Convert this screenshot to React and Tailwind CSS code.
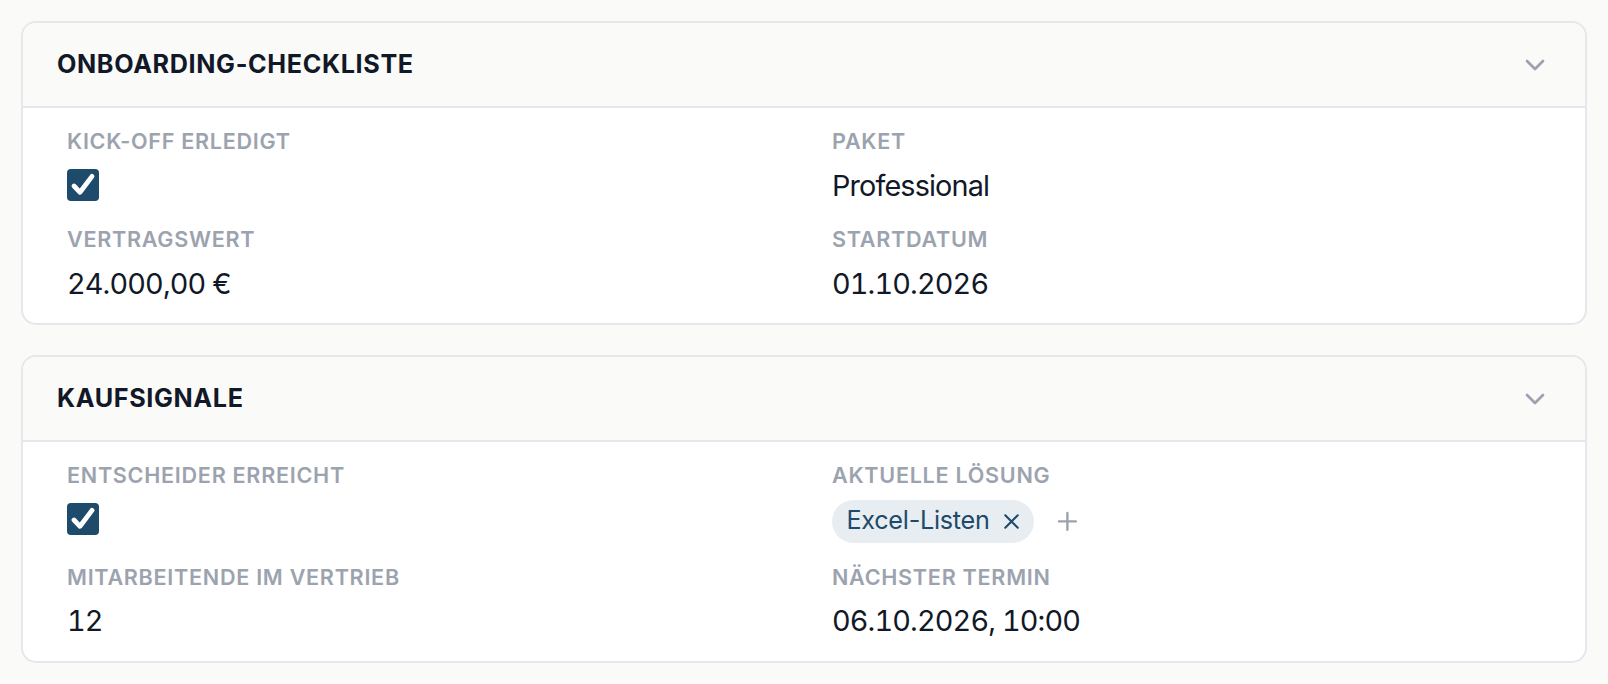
import React from "react";
import { ChevronDown, X, Plus } from "lucide-react";

function Checkbox() {
  return (
    <div className="flex h-[43.2px] items-center">
      <span className="flex h-[32px] w-[32px] items-center justify-center rounded-[4px] bg-[#1e4a6b]">
        <svg width="32" height="32" viewBox="0 0 32 32" fill="none">
          <polyline
            points="7,17 13,23.3 25,7.4"
            stroke="white"
            strokeWidth="4.8"
            strokeLinecap="round"
            strokeLinejoin="round"
          />
        </svg>
      </span>
    </div>
  );
}

function Field({ label, children }) {
  return (
    <div className="flex flex-col gap-[8px]">
      <div className="text-[21.6px] leading-[28.8px] font-semibold uppercase tracking-[0.033em] text-[#9ca3af]">
        {label}
      </div>
      {children}
    </div>
  );
}

function Value({ children }) {
  return (
    <div className="text-[28.8px] leading-[43.2px] tracking-[-0.03em] tabular-nums text-[#111827]">
      {children}
    </div>
  );
}

function Chip({ children }) {
  return (
    <span className="inline-flex h-[43px] items-center gap-[9px] rounded-full bg-[#e8edf1] pl-[14.4px] pr-[10px] text-[25.2px] tracking-[-0.01em] text-[#1e4a6b]">
      {children}
      <X size={25} strokeWidth={2} className="text-[#1e4a6b]" />
    </span>
  );
}

function Card({ title, children }) {
  return (
    <section className="overflow-hidden rounded-[15px] border-2 border-[#e6e7eb] bg-white">
      <header className="flex h-[85px] items-center justify-between border-b-2 border-[#e6e7eb] bg-[#fafaf9] px-[34px]">
        <h2 className="text-[25.2px] font-bold uppercase tracking-wide text-[#111827]">{title}</h2>
        <ChevronDown size={32} strokeWidth={2} className="text-[#9ca3af]" />
      </header>
      <div className="grid grid-cols-2 gap-x-[56px] gap-y-[18px] px-[44px] pt-[19px] pb-[18px]">
        {children}
      </div>
    </section>
  );
}

export default function App() {
  return (
    <div className="flex min-h-screen flex-col gap-[30px] bg-[#fafaf9] p-[21px] font-['Inter','Noto_Sans',sans-serif]">
      <Card title="Onboarding-Checkliste">
        <Field label="Kick-off erledigt">
          <Checkbox />
        </Field>
        <Field label="Paket">
          <Value>Professional</Value>
        </Field>
        <Field label="Vertragswert">
          <Value>24.000,00 €</Value>
        </Field>
        <Field label="Startdatum">
          <Value>01.10.2026</Value>
        </Field>
      </Card>

      <Card title="Kaufsignale">
        <Field label="Entscheider erreicht">
          <Checkbox />
        </Field>
        <Field label="Aktuelle Lösung">
          <div className="flex items-center gap-[10px]">
            <Chip>Excel-Listen</Chip>
            <button type="button" className="p-[9px] text-[#9ca3af]">
              <Plus size={28.8} strokeWidth={2} />
            </button>
          </div>
        </Field>
        <Field label="Mitarbeitende im Vertrieb">
          <Value>12</Value>
        </Field>
        <Field label="Nächster Termin">
          <Value>06.10.2026, 10:00</Value>
        </Field>
      </Card>
    </div>
  );
}
